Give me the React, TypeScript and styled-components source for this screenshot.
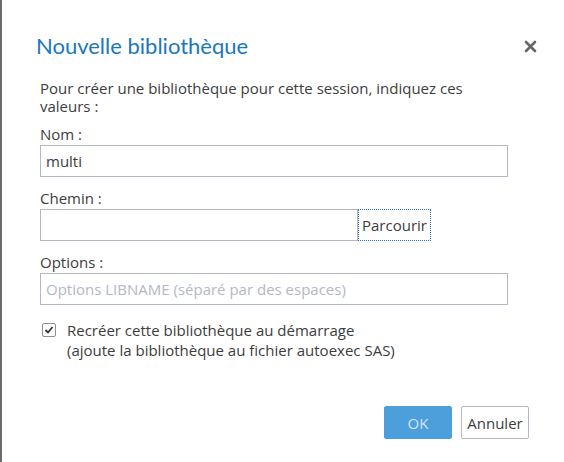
import React, { useState } from 'react';
import styled, { createGlobalStyle } from 'styled-components';

const GlobalStyle = createGlobalStyle`
    html, body {
        margin: 0;
        padding: 0;
        background: #fff;
    }
    * {
        box-sizing: border-box;
    }
`;

const Dialog = styled.div`
    display: flex;
    flex-direction: column;
    width: 564px;
    height: 462px;
    border-left: 2px solid #6b6b6b;
    background: #fff;
    font-family: 'Open Sans', 'Noto Sans', sans-serif;
    font-size: 15px;
    color: #3d3d3d;
`;

const Header = styled.div`
    display: flex;
    align-items: center;
    justify-content: space-between;
    padding: 30px 26px 0 34px;
    height: 62px;
`;

const Title = styled.h1`
    margin: 0;
    font-family: Lato, 'Noto Sans', sans-serif;
    font-size: 22px;
    font-weight: 400;
    color: #1b77bd;
    line-height: 26px;
`;

const CloseButton = styled.button`
    display: flex;
    align-items: center;
    justify-content: center;
    width: 16px;
    height: 16px;
    padding: 0;
    border: none;
    background: none;
    cursor: pointer;
`;

const Body = styled.div`
    display: flex;
    flex-direction: column;
    padding: 17px 56px 0 38px;
    flex: 1;
`;

const Intro = styled.p`
    margin: 0 0 10px 0;
    line-height: 18px;
`;

const Field = styled.div`
    display: flex;
    flex-direction: column;
    margin-bottom: 12px;
`;

const Label = styled.label`
    line-height: 18px;
    margin-bottom: 2px;
`;

const Input = styled.input<{ $width?: number }>`
    height: 32px;
    width: ${(p) => (p.$width ? `${p.$width}px` : '100%')};
    border: 1px solid #b2b8c6;
    padding: 0 5px;
    font-family: inherit;
    font-size: 15px;
    color: #3d3d3d;
    outline: none;
    &::placeholder {
        color: #b4b8c2;
    }
`;

const PathRow = styled.div`
    display: flex;
`;

const BrowseButton = styled.button`
    height: 32px;
    padding: 0 3px;
    border: 1px dotted #1a6ec0;
    background: #fff;
    font-family: inherit;
    font-size: 15px;
    color: #3d3d3d;
    cursor: pointer;
`;

const CheckRow = styled.label`
    display: flex;
    align-items: flex-start;
    gap: 11px;
    margin-top: 3px;
    padding-left: 2px;
    line-height: 20px;
    cursor: pointer;
`;

const Box = styled.span`
    display: flex;
    align-items: center;
    justify-content: center;
    flex: none;
    width: 14px;
    height: 14px;
    margin-top: 3px;
    border: 1px solid #8a8f99;
    border-radius: 2px;
    background: #fff;
`;

const Footer = styled.div`
    display: flex;
    justify-content: flex-end;
    gap: 9px;
    padding: 0 35px 23px 0;
`;

const Button = styled.button<{ $primary?: boolean }>`
    height: 33px;
    min-width: 68px;
    padding: 0 5px;
    font-family: inherit;
    font-size: 15px;
    border-radius: 2px;
    cursor: pointer;
    border: 1px solid ${(p) => (p.$primary ? '#4d9fdc' : '#b2b8c6')};
    background: ${(p) => (p.$primary ? '#4d9fdc' : '#fff')};
    color: ${(p) => (p.$primary ? '#d3e6f6' : '#3d3d3d')};
`;

export default function App() {
    const [name, setName] = useState('multi');
    const [path, setPath] = useState('');
    const [options, setOptions] = useState('');
    const [recreate, setRecreate] = useState(true);

    return (
        <>
            <GlobalStyle />
            <Dialog>
                <Header>
                    <Title>Nouvelle bibliothèque</Title>
                    <CloseButton aria-label="Fermer">
                        <svg width="13" height="13" viewBox="0 0 13 13">
                            <path
                                d="M2 2 L11 11 M11 2 L2 11"
                                stroke="#666"
                                strokeWidth="2.6"
                                strokeLinecap="round"
                            />
                        </svg>
                    </CloseButton>
                </Header>
                <Body>
                    <Intro>
                        Pour créer une bibliothèque pour cette session, indiquez ces
                        valeurs :
                    </Intro>
                    <Field>
                        <Label>Nom :</Label>
                        <Input value={name} onChange={(e) => setName(e.target.value)} />
                    </Field>
                    <Field>
                        <Label>Chemin :</Label>
                        <PathRow>
                            <Input
                                $width={318}
                                value={path}
                                onChange={(e) => setPath(e.target.value)}
                            />
                            <BrowseButton>Parcourir</BrowseButton>
                        </PathRow>
                    </Field>
                    <Field>
                        <Label>Options :</Label>
                        <Input
                            placeholder="Options LIBNAME (séparé par des espaces)"
                            value={options}
                            onChange={(e) => setOptions(e.target.value)}
                        />
                    </Field>
                    <CheckRow onClick={() => setRecreate(!recreate)}>
                        <Box>
                            {recreate && (
                                <svg width="10" height="10" viewBox="0 0 10 10">
                                    <path
                                        d="M1.5 5 L4 7.5 L8.5 2"
                                        stroke="#333"
                                        strokeWidth="1.8"
                                        fill="none"
                                    />
                                </svg>
                            )}
                        </Box>
                        <span>
                            Recréer cette bibliothèque au démarrage
                            <br />
                            (ajoute la bibliothèque au fichier autoexec SAS)
                        </span>
                    </CheckRow>
                </Body>
                <Footer>
                    <Button $primary>OK</Button>
                    <Button>Annuler</Button>
                </Footer>
            </Dialog>
        </>
    );
}
